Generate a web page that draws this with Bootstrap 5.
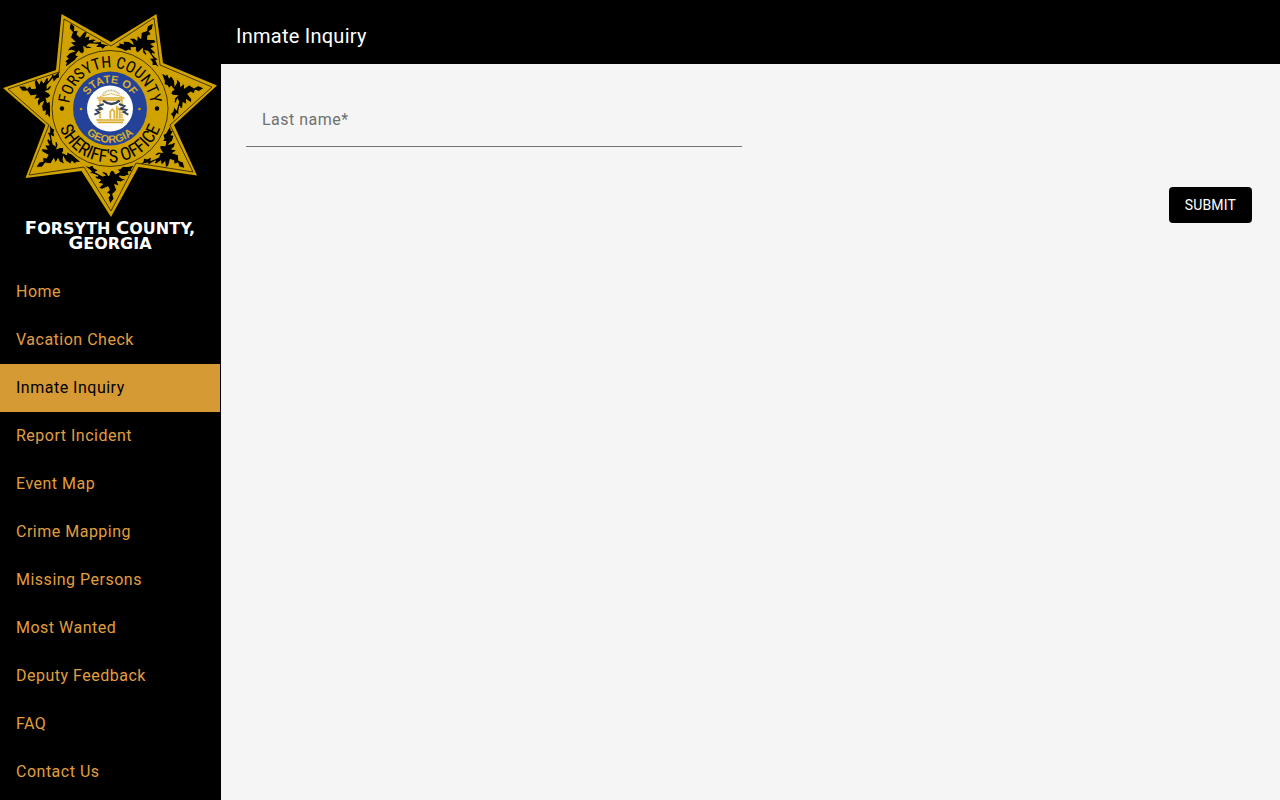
<!DOCTYPE html>
<html lang="en">
<head>
<meta charset="utf-8">
<meta name="viewport" content="width=device-width, initial-scale=1">
<title>Inmate Inquiry</title>
<link rel="stylesheet" href="https://cdn.jsdelivr.net/npm/bootstrap@5.3.0/dist/css/bootstrap.min.css">
<style>
  body { font-family: Roboto, sans-serif; background: #f5f5f5; }
  .sidebar { width: 221px; border-right: 1px solid #000; }
  .brand { height: 268px; }
  .side-link { height: 48px; padding: 0 16px; font-size: 16px; line-height: 24px; letter-spacing: .03125em; color: #e09f3e; border-radius: 0; }
  .side-link:hover { color: #f0b860; }
  .side-link.active { background: #d69a35; color: #000; }
  .topbar { height: 64px; padding: 8px 15px 0; }
  .topbar h1 { font-size: 20px; line-height: 32px; font-weight: 400; letter-spacing: .0125em; }
  .inquiry { padding: 27px 28px 24px 25px; }
  .field-row { --bs-gutter-x: 14px; }
  .line-field > .line-input { height: 56px; min-height: 56px; padding: 16px 16px 0; font-size: 16px; letter-spacing: .03125em; color: #222; background: transparent; border: 0; border-bottom: 1px solid #747474; border-radius: 0; }
  .line-field > .line-input:focus { box-shadow: none; border-color: #000; }
  .line-field > label { padding: 16px 15px 0; font-size: 16px; line-height: 24px; letter-spacing: .03125em; color: #707070; }
  .submit { height: 36px; padding: 0 16px; margin-top: 40px; font-size: 14px; font-weight: 400; letter-spacing: .0125em; border-radius: 4px; background: #000; color: #fff; border: 0; }
</style>
</head>
<body>
<div class="d-flex min-vh-100">
  <aside class="sidebar bg-black flex-shrink-0">
    <a href="#" class="brand d-block" aria-label="Forsyth County, Georgia">
      <svg class="d-block w-100" viewBox="0 0 220 260" role="img">
        <defs>
          <path id="topArc" d="M69 108.500A41 41 0 0 1 151 108.500"/>
          <path id="lowArc" d="M56 108.500A54 54 0 0 0 164 108.500"/>
          <path id="sealTop" d="M84.500 108.500A25.500 25.500 0 0 1 135.500 108.500"/>
          <path id="sealLow" d="M75.500 108.500A34.500 34.500 0 0 0 144.500 108.500"/>
          <path id="leaf" stroke="#d0a300" stroke-width="3" transform="translate(82 162) scale(.3333)" d="M6 10L22 14 32 9 36 18 50 25 40 30 52 37 62 42 70 40 60 33 62 28 74 32 80 42 84 30 90 24 98 30 100 36 112 30 106 22 116 20 122 10 132 14 158 10 148 22 152 28 138 30 142 38 126 44 112 42 118 48 132 52 116 60 106 58 112 72 98 68 104 84 92 96 96 110 84 126 78 108 84 98 74 92 82 84 78 74 60 82 50 78 62 66 48 64 56 54 42 50 38 42 48 42 34 36 22 34 28 28Z"/>
        </defs>
        <path fill="#d0a300" d="M61.500 14L111 42 156.500 14 163 63 217 85.500 174 125 197 175.500 138.500 167 111 217 81.500 171 25.500 178 45.500 125 3 88 56 70z"/>
        <use href="#leaf"/>
        <use href="#leaf" transform="rotate(51.430 111 108.500)"/>
        <use href="#leaf" transform="rotate(102.860 111 108.500)"/>
        <use href="#leaf" transform="rotate(154.290 111 108.500)"/>
        <use href="#leaf" transform="rotate(205.710 111 108.500)"/>
        <use href="#leaf" transform="rotate(257.140 111 108.500)"/>
        <use href="#leaf" transform="rotate(308.570 111 108.500)"/>
        <path fill="none" stroke="#241c00" stroke-width=".8" d="M64 19L111 46 154 18 160 65 212 87 170 125 193 172 136 163 111 211 84 167 29 175 49 125 8 89 59 72z"/>
        <circle cx="110" cy="108.500" r="60" fill="#d0a300"/>
        <circle cx="110" cy="108.500" r="58" fill="none" stroke="#241c00" stroke-width=".8"/>
        <circle cx="110" cy="108.500" r="37" fill="#24429a"/>
        <circle cx="110" cy="108.500" r="23" fill="#fff"/>
        <circle cx="62" cy="108.500" r="2.200"/>
        <circle cx="157" cy="108.500" r="2.200"/>
        <circle cx="81" cy="109" r="1.300" fill="#d0a300"/>
        <circle cx="139.500" cy="109" r="1.300" fill="#d0a300"/>
        <g transform="translate(85 82) scale(.3333)" fill="none">
          <path d="M52 38Q78 12 105 38" stroke="#c9b67a" stroke-width="6" stroke-dasharray="3 2"/>
          <path d="M44 44L78 35 112 44" stroke="#e0b84a" stroke-width="3"/>
          <path d="M36 48H118M40 54H114" stroke="#dba928" stroke-width="5"/>
          <path d="M45 54V112M110 54V112" stroke="#e0b84a" stroke-width="7" stroke-dasharray="5 2"/>
          <path d="M34 114H118M38 121H114" stroke="#dba928" stroke-width="5"/>
          <path d="M76 110V88L82 82 88 88V110M96 110V76L104 84V110" stroke="#e0b84a" stroke-width="6"/>
          <path d="M54 56Q80 76 104 56" stroke="#34415a" stroke-width="7"/>
          <path d="M56 66L40 72 50 80 34 84 42 92 28 98M102 66L118 72 108 80 124 84 116 90 130 98" stroke="#34415a" stroke-width="6"/>
        </g>
        <g font-family="'Roboto Condensed','Liberation Sans Narrow',sans-serif" text-anchor="middle">
          <text font-size="16"><textPath href="#topArc" startOffset="50%">FORSYTH COUNTY</textPath></text>
          <text font-size="18"><textPath href="#lowArc" startOffset="50%">SHERIFF'S OFFICE</textPath></text>
        </g>
        <g font-family="'Liberation Sans',sans-serif" font-weight="700" font-size="11" fill="#d8b02a" text-anchor="middle">
          <text><textPath href="#sealTop" startOffset="50%">STATE OF</textPath></text>
          <text><textPath href="#sealLow" startOffset="50%">GEORGIA</textPath></text>
        </g>
        <g font-family="'DejaVu Sans',sans-serif" font-weight="700" font-size="16" fill="#fff" text-anchor="middle">
          <text x="110" y="234"><tspan font-size="18">F</tspan>ORSYTH <tspan font-size="18">C</tspan>OUNTY,</text>
          <text x="110" y="249"><tspan font-size="18">G</tspan>EORGIA</text>
        </g>
      </svg>
    </a>
    <nav class="nav flex-column">
      <a class="nav-link side-link d-flex align-items-center" href="#">Home</a>
      <a class="nav-link side-link d-flex align-items-center" href="#">Vacation Check</a>
      <a class="nav-link side-link d-flex align-items-center active" aria-current="page" href="#">Inmate Inquiry</a>
      <a class="nav-link side-link d-flex align-items-center" href="#">Report Incident</a>
      <a class="nav-link side-link d-flex align-items-center" href="#">Event Map</a>
      <a class="nav-link side-link d-flex align-items-center" href="#">Crime Mapping</a>
      <a class="nav-link side-link d-flex align-items-center" href="#">Missing Persons</a>
      <a class="nav-link side-link d-flex align-items-center" href="#">Most Wanted</a>
      <a class="nav-link side-link d-flex align-items-center" href="#">Deputy Feedback</a>
      <a class="nav-link side-link d-flex align-items-center" href="#">FAQ</a>
      <a class="nav-link side-link d-flex align-items-center" href="#">Contact Us</a>
    </nav>
  </aside>
  <div class="flex-grow-1">
    <header class="topbar bg-black text-white d-flex align-items-center"><h1 class="m-0">Inmate Inquiry</h1></header>
    <main>
      <form class="inquiry">
        <div class="row field-row">
          <div class="col-6">
            <div class="form-floating line-field">
              <input class="form-control line-input" id="lastName" type="text" placeholder=" " required>
              <label for="lastName">Last name*</label>
            </div>
          </div>
        </div>
        <div class="d-flex justify-content-end">
          <button class="btn submit" type="submit">SUBMIT</button>
        </div>
      </form>
    </main>
  </div>
</div>
<script src="https://cdn.jsdelivr.net/npm/bootstrap@5.3.0/dist/js/bootstrap.bundle.min.js"></script>
</body>
</html>
